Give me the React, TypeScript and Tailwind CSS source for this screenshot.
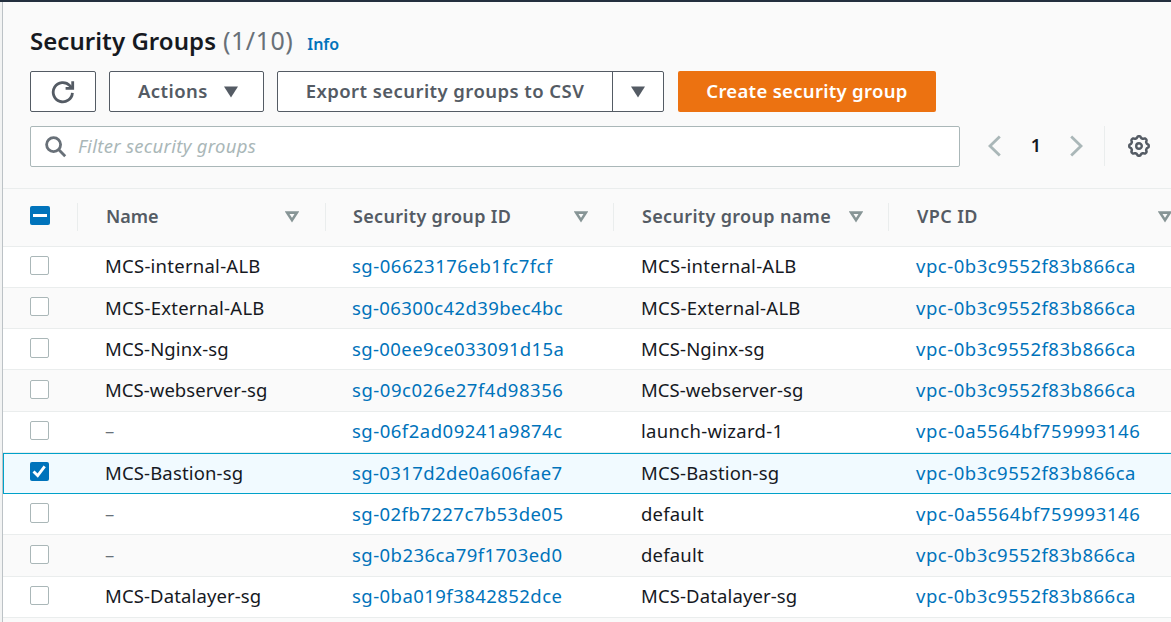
import React from "react";

type Group = {
  name: string;
  id: string;
  groupName: string;
  vpc: string;
  selected?: boolean;
  rowClass: string;
  textClass: string;
  checkClass: string;
  boxClass: string;
  nameClass: string;
  idClass: string;
};

const MAIN_VPC = "vpc-0b3c9552f83b866ca";
const ALT_VPC = "vpc-0a5564bf759993146";

const groups: Group[] = [
  { name: "MCS-internal-ALB", id: "sg-06623176eb1fc7fcf", groupName: "MCS-internal-ALB", vpc: MAIN_VPC, rowClass: "h-[41px] bg-white", textClass: "pt-[5px]", checkClass: "pt-[9px]", boxClass: "h-[19px]", nameClass: "tracking-[0.25px]", idClass: "tracking-[0.51px]" },
  { name: "MCS-External-ALB", id: "sg-06300c42d39bec4bc", groupName: "MCS-External-ALB", vpc: MAIN_VPC, rowClass: "h-[41px] bg-[#fafafa]", textClass: "pt-[6px]", checkClass: "pt-[9px]", boxClass: "h-[19px]", nameClass: "tracking-[0.26px]", idClass: "tracking-[0.39px]" },
  { name: "MCS-Nginx-sg", id: "sg-00ee9ce033091d15a", groupName: "MCS-Nginx-sg", vpc: MAIN_VPC, rowClass: "h-[41px] bg-white", textClass: "pt-[6px]", checkClass: "pt-[9px]", boxClass: "h-[20px]", nameClass: "tracking-[0.14px]", idClass: "tracking-[0.39px]" },
  { name: "MCS-webserver-sg", id: "sg-09c026e27f4d98356", groupName: "MCS-webserver-sg", vpc: MAIN_VPC, rowClass: "h-[42px] bg-[#fafafa]", textClass: "pt-[6px]", checkClass: "pt-[10px]", boxClass: "h-[19px]", nameClass: "tracking-[0.05px]", idClass: "tracking-[0.53px]" },
  { name: "–", id: "sg-06f2ad09241a9874c", groupName: "launch-wizard-1", vpc: ALT_VPC, rowClass: "h-[41px] bg-white", textClass: "pt-[5px]", checkClass: "pt-[9px]", boxClass: "h-[19px]", nameClass: "tracking-[0.3px]", idClass: "tracking-[0.5px]" },
  { name: "MCS-Bastion-sg", id: "sg-0317d2de0a606fae7", groupName: "MCS-Bastion-sg", vpc: MAIN_VPC, selected: true, rowClass: "h-[41px] bg-[#f1faff]", textClass: "pt-[6px]", checkClass: "pt-[9px]", boxClass: "h-[19px]", nameClass: "tracking-[0.15px]", idClass: "tracking-[0.39px]" },
  { name: "–", id: "sg-02fb7227c7b53de05", groupName: "default", vpc: ALT_VPC, rowClass: "h-[41px] bg-white", textClass: "pt-[6px]", checkClass: "pt-[9px]", boxClass: "h-[20px]", nameClass: "tracking-[0.2px]", idClass: "tracking-[0.45px]" },
  { name: "–", id: "sg-0b236ca79f1703ed0", groupName: "default", vpc: MAIN_VPC, rowClass: "h-[42px] bg-[#fafafa]", textClass: "pt-[6px]", checkClass: "pt-[10px]", boxClass: "h-[19px]", nameClass: "tracking-[0.2px]", idClass: "tracking-[0.45px]" },
  { name: "MCS-Datalayer-sg", id: "sg-0ba019f3842852dce", groupName: "MCS-Datalayer-sg", vpc: MAIN_VPC, rowClass: "h-[41px] bg-white", textClass: "pt-[5px]", checkClass: "pt-[9px]", boxClass: "h-[19px]", nameClass: "tracking-[0.12px]", idClass: "tracking-[0.45px]" },
];

const columns = "grid grid-cols-[74px_248px_288px_275px_1fr]";

function Caret() {
  return (
    <svg className="block h-3 w-[14px] shrink-0" viewBox="0 0 14 12" fill="#545b64">
      <path d="M0 .5h14L7 11.5z" />
    </svg>
  );
}

function SortIcon() {
  return (
    <svg className="block h-3 w-[14px] shrink-0" viewBox="0 0 14 12" fill="none" stroke="#879596" strokeWidth="2.6">
      <path d="M2.1 1.6h9.8L7 9.2z" />
    </svg>
  );
}

function Chevron({ right = false }: { right?: boolean }) {
  return (
    <svg className="block h-[22px] w-[13px] shrink-0" viewBox="0 0 13 22" fill="none" stroke="#aab7b8" strokeWidth="2.8">
      <path d={right ? "M1.2 1.5l9.8 9.5-9.8 9.5" : "M11.8 1.5L2 11l9.8 9.5"} />
    </svg>
  );
}

function Gear() {
  const points: string[] = [];
  const steps = 96;
  for (let i = 0; i < steps; i++) {
    const angle = (i / steps) * Math.PI * 2;
    const radius = 8.9 + 0.85 * Math.tanh(2 * Math.cos(8 * angle));
    points.push(`${(11 + radius * Math.cos(angle)).toFixed(2)},${(11 + radius * Math.sin(angle)).toFixed(2)}`);
  }
  return (
    <svg className="block size-[22px]" viewBox="0 0 22 22" fill="none" stroke="#545b64" strokeWidth="2.5">
      <polygon points={points.join(" ")} strokeLinejoin="round" />
      <circle cx="11" cy="11" r="2.8" strokeWidth="2.4" />
    </svg>
  );
}

function Checkbox({ checked = false, boxClass }: { checked?: boolean; boxClass: string }) {
  return checked ? (
    <span className="flex size-[19px] items-center justify-center rounded-[2px] bg-[#0073bb]">
      <svg className="block size-[19px]" viewBox="0 0 19 19" fill="none" stroke="#fff" strokeWidth="2.8">
        <path d="M3.5 9.4l4.2 4.2 7-9.3" />
      </svg>
    </span>
  ) : (
    <span className={`block w-[19px] rounded-[2px] border border-[#aab7b8] bg-white ${boxClass}`} />
  );
}

function HeaderCell({ label, cellClass }: { label: string; cellClass: string }) {
  return (
    <div className={`mt-[14px] flex h-7 items-center justify-between border-l border-[#eaeded] ${cellClass}`}>
      <span className="whitespace-nowrap pb-px text-[18px] font-semibold leading-[27px] text-[#545b64]">{label}</span>
      <SortIcon />
    </div>
  );
}

export default function App() {
  return (
    <div className="flex h-[622px] w-[1171px] flex-col overflow-hidden bg-[#fafafa] font-['Noto_Sans','Open_Sans',sans-serif] text-[#16191f]">
      <div className="h-[2px] shrink-0 bg-[#232f3e]" />
      <div className="flex min-h-0 flex-1">
        <div className="w-[3px] shrink-0 border-r border-[#bcc2c6] bg-[#f2f3f3]" />
        <main className="flex min-w-0 flex-1 flex-col">
          <header className="h-[187px] shrink-0 border-b border-[#eaeded] pl-[27px] pt-[20px]">
            <div className="flex h-9 items-baseline whitespace-nowrap">
              <h1 className="text-[24px] font-semibold leading-9 tracking-[0.05px]">Security Groups</h1>
              <span className="ml-[7px] text-[25px] leading-9 tracking-[0.5px] text-[#687078]">(1/10)</span>
              <a className="ml-[14px] text-[16px] font-semibold text-[#0073bb]">Info</a>
            </div>
            <div className="mt-[13px] flex h-[41px] text-[18.5px] font-semibold text-[#545b64]">
              <button className="flex w-[66px] items-center justify-center rounded-[2px] border border-[#545b64] bg-white">
                <svg className="block size-[24px]" viewBox="0 0 24 24" fill="none" stroke="#545b64" strokeWidth="2.8">
                  <path d="M21.4 12.8A9.6 9.6 0 1 1 18.8 5.6L20.8 8" />
                  <path d="M21.7 1.2v7.2H14.6" />
                </svg>
              </button>
              <button className="ml-[13px] flex w-[155px] items-center justify-between rounded-[2px] border border-[#545b64] bg-white pl-7 pr-[25px] tracking-[0.42px]">
                <span className="pb-[2px]">Actions</span>
                <Caret />
              </button>
              <div className="ml-[13px] flex w-[387px] rounded-[2px] border border-[#545b64] bg-white">
                <button className="w-[335px] whitespace-nowrap border-r border-[#545b64] pb-[2px] tracking-[0.43px]">Export security groups to CSV</button>
                <button className="flex flex-1 items-center justify-center">
                  <Caret />
                </button>
              </div>
              <button className="ml-[14px] w-[258px] whitespace-nowrap rounded-[2px] bg-[#ec7211] pb-[2px] tracking-[0.3px] text-white">Create security group</button>
            </div>
            <div className="mt-[14px] flex h-[40px] items-center">
              <div className="flex h-[41px] w-[930px] items-center self-start rounded-[2px] border border-[#aab7b8] bg-white pl-[14px]">
                <svg className="block size-[22px]" viewBox="0 0 22 22" fill="none" stroke="#687078" strokeWidth="2.8">
                  <circle cx="8.6" cy="8.6" r="7" />
                  <path d="M13.6 13.6l6.6 6.6" />
                </svg>
                <span className="ml-[11px] pb-[2px] text-[18.5px] italic tracking-[0.3px] text-[#aab7b8]">Filter security groups</span>
              </div>
              <div className="ml-[28px]"><Chevron /></div>
              <span className="ml-[29px] w-3 pb-px text-center text-[18px] font-semibold">1</span>
              <div className="ml-[28px]"><Chevron right /></div>
              <div className="ml-[21px] h-10 border-l border-[#eaeded]" />
              <div className="ml-[23px]"><Gear /></div>
            </div>
          </header>

          <div className={`${columns} h-[58px] shrink-0 items-start border-b border-[#eaeded]`}>
            <div className="pl-[27px] pt-[17px]">
              <span className="flex h-[19px] w-5 items-center justify-center rounded-[2px] bg-[#0073bb]">
                <span className="h-[3px] w-[14px] bg-white" />
              </span>
            </div>
            <HeaderCell label="Name" cellClass="pl-7 pr-[26px]" />
            <HeaderCell label="Security group ID" cellClass="pl-[27px] pr-[25px] tracking-[0.32px]" />
            <HeaderCell label="Security group name" cellClass="pl-7 pr-[25px] tracking-[0.33px]" />
            <HeaderCell label="VPC ID" cellClass="-mr-px pl-7 tracking-[0.4px]" />
          </div>

          {groups.map((group) => (
            <div
              key={group.id}
              className={`${columns} shrink-0 items-start whitespace-nowrap border-b text-[18.5px] leading-[27px] ${group.rowClass} ${
                group.selected ? "border-[#00a1c9] shadow-[inset_0_1px_0_#00a1c9,inset_1px_0_0_#00a1c9]" : "border-[#eaeded]"
              }`}
            >
              <div className={`pl-[27px] ${group.checkClass}`}>
                <Checkbox checked={group.selected} boxClass={group.boxClass} />
              </div>
              <span className={`pl-7 ${group.textClass} ${group.nameClass} ${group.name === "–" ? "text-[#687078]" : ""}`}>{group.name}</span>
              <a className={`pl-[27px] text-[#0073bb] ${group.textClass} ${group.idClass}`}>{group.id}</a>
              <span className={`pl-7 ${group.textClass} ${group.nameClass}`}>{group.groupName}</span>
              <a className={`pl-7 text-[#0073bb] ${group.textClass} ${group.vpc === ALT_VPC ? "tracking-[0.6px]" : "tracking-[0.51px]"}`}>{group.vpc}</a>
            </div>
          ))}
          <div className="flex-1 bg-[#fafafa]" />
        </main>
      </div>
    </div>
  );
}
